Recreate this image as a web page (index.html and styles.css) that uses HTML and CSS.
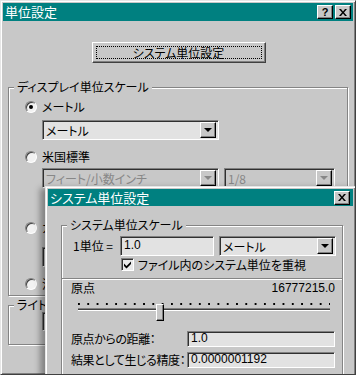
FILE: index.html
```html
<!DOCTYPE html>
<html lang="ja">
<head>
    <meta charset="UTF-8">
    <title>単位設定</title>
    <link rel="stylesheet" href="styles.css">
</head>
<body>
    <div class="window main-window">
        <div class="titlebar">
            <span class="title">単位設定</span>
            <span class="caption-buttons">
                <span class="cap-btn help">?</span>
                <span class="cap-btn">
                    <svg width="8" height="7" viewBox="0 0 8 7"><path d="M0 0h2l2 2.5L6 0h2L5 3.5 8 7H6L4 4.5 2 7H0l3-3.5z" fill="#000"/></svg>
                </span>
            </span>
        </div>
        <div class="main-body">
            <div class="button-row">
                <div class="push-button"><span class="focus-ring">システム単位設定</span></div>
            </div>

            <fieldset class="group display-group">
                <legend>ディスプレイ単位スケール</legend>
                <div class="option-row first"><span class="radio checked"></span><span>メートル</span></div>
                <div class="indent gap-6">
                    <div class="combo w-176"><span class="combo-text">メートル</span><span class="combo-arrow"></span></div>
                </div>
                <div class="option-row gap-10"><span class="radio"></span><span>米国標準</span></div>
                <div class="indent combo-pair gap-4">
                    <div class="combo disabled w-176"><span class="combo-text">フィート/小数インチ</span><span class="combo-arrow"></span></div>
                    <div class="combo disabled w-110"><span class="combo-text">1/8</span><span class="combo-arrow"></span></div>
                </div>
                <div class="option-row gap-33"><span class="radio"></span><span>カスタム</span></div>
                <div class="indent gap-12">
                    <div class="combo w-176"><span class="combo-text">FL</span><span class="combo-arrow"></span></div>
                </div>
                <div class="option-row gap-10"><span class="radio"></span><span>汎用単位</span></div>
            </fieldset>

            <fieldset class="group light-group">
                <legend>ライト単位</legend>
                <div class="indent">
                    <div class="combo w-176 short"><span class="combo-text">インターナショナル</span><span class="combo-arrow"></span></div>
                </div>
            </fieldset>
        </div>

        <!-- second dialog lies over the first one -->
        <div class="window sys-dialog">
            <div class="titlebar">
                <span class="title">システム単位設定</span>
                <span class="caption-buttons">
                    <span class="cap-btn">
                        <svg width="8" height="7" viewBox="0 0 8 7"><path d="M0 0h2l2 2.5L6 0h2L5 3.5 8 7H6L4 4.5 2 7H0l3-3.5z" fill="#000"/></svg>
                    </span>
                </span>
            </div>
            <div class="sys-body">
                <fieldset class="group sys-group">
                    <legend>システム単位スケール</legend>
                    <div class="unit-row">
                        <span class="unit-label">1単位 =</span>
                        <div class="field w-94">1.0</div>
                        <div class="combo w-117"><span class="combo-text">メートル</span><span class="combo-arrow"></span></div>
                    </div>
                    <div class="check-row">
                        <span class="checkbox">
                            <svg width="9" height="9" viewBox="0 0 9 9"><path d="M1 3.5l2.5 2.5L8 1.5v2.5L3.5 8.5 1 6z" fill="#000"/></svg>
                        </span>
                        <span>ファイル内のシステム単位を重視</span>
                    </div>

                    <div class="origin-section">
                        <div class="origin-row">
                            <span>原点</span>
                            <span>16777215.0</span>
                        </div>
                        <div class="slider">
                            <div class="ticks"></div>
                            <div class="track"></div>
                            <div class="thumb"></div>
                        </div>
                        <div class="value-row">
                            <span class="value-label">原点からの距離：</span>
                            <div class="field w-148">1.0</div>
                        </div>
                        <div class="value-row">
                            <span class="value-label">結果として生じる精度：</span>
                            <div class="field w-148">0.0000001192</div>
                        </div>
                    </div>
                </fieldset>
            </div>
        </div>
    </div>
</body>
</html>
```

FILE: styles.css
```css
body {
    margin: 0;
    padding: 0;
    width: 356px;
    height: 375px;
    overflow: hidden;
    background-color: #c8c8c8;
    font-family: "Noto Sans CJK JP", sans-serif;
    font-size: 12px;
    font-feature-settings: "palt";
    color: #000;
}
.window {
    box-sizing: border-box;
    background-color: #c8c8c8;
    border: 1px solid;
    border-color: #e6e6e6 #404040 #404040 #e6e6e6;
    padding: 2px;
    box-shadow: inset 1px 1px 0 #fff, inset -1px -1px 0 #808080;
}
.main-window {
    position: relative;
    width: 356px;
    height: 375px;
    overflow: hidden;
}
.titlebar {
    height: 18px;
    background-color: #008080;
    color: #fff;
    display: flex;
    align-items: center;
    justify-content: space-between;
    padding: 0 2px 0 2px;
}
.title {
    font-size: 13px;
    line-height: 14px;
}
.caption-buttons {
    display: flex;
    gap: 2px;
}
.cap-btn {
    box-sizing: border-box;
    width: 16px;
    height: 14px;
    background-color: #c8c8c8;
    border: 1px solid;
    border-color: #fff #000 #000 #fff;
    box-shadow: inset -1px -1px 0 #808080;
    display: flex;
    align-items: center;
    justify-content: center;
    color: #000;
}
.help {
    font-family: "Liberation Sans", sans-serif;
    font-weight: bold;
    font-size: 11px;
    line-height: 12px;
}

.main-body {
    padding: 21px 5px 0 5px;
}
.button-row {
    display: flex;
    justify-content: center;
    margin-bottom: 17px;
}
.push-button {
    box-sizing: border-box;
    width: 174px;
    height: 21px;
    margin-left: 1px;
    border: 1px solid;
    border-color: #fff #404040 #404040 #fff;
    box-shadow: inset -1px -1px 0 #808080;
    padding: 3px;
}
.focus-ring {
    display: flex;
    align-items: center;
    justify-content: center;
    height: 100%;
    box-sizing: border-box;
    border: 1px dotted #000;
    line-height: 13px;
}

.group {
    margin: 0;
    padding: 0 0 4px 0;
    border: 1px solid #848484;
    box-shadow: 1px 1px 0 #fff, inset 1px 1px 0 #fff;
    min-width: 0;
}
.group legend {
    padding: 0 3px;
    margin-left: 5px;
    line-height: 14px;
    height: 14px;
    background-color: #c8c8c8;
}
.display-group {
    width: 340px;
    box-sizing: border-box;
}
.light-group {
    width: 340px;
    box-sizing: border-box;
    margin-top: 2px;
    height: 47px;
    padding-bottom: 0;
}
.option-row {
    display: flex;
    align-items: center;
    height: 14px;
    line-height: 14px;
    padding-left: 16px;
    gap: 5px;
}
.option-row.first {
    margin-top: 6px;
}
.gap-4 { margin-top: 4px; }
.gap-6 { margin-top: 6px; }
.gap-10 { margin-top: 10px; }
.gap-12 { margin-top: 12px; }
.gap-33 { margin-top: 33px; }

.radio {
    box-sizing: border-box;
    width: 12px;
    height: 12px;
    border-radius: 50%;
    border: 1px solid;
    border-color: #808080 #fff #fff #808080;
    background-color: #f2f2f2;
    box-shadow: inset 1px 1px 0 #404040;
    position: relative;
}
.radio.checked::after {
    content: "";
    position: absolute;
    left: 3px;
    top: 3px;
    width: 4px;
    height: 4px;
    border-radius: 50%;
    background-color: #000;
}
.indent {
    padding-left: 33px;
}
.combo-pair {
    display: flex;
    gap: 5px;
}
.combo {
    box-sizing: border-box;
    height: 20px;
    display: flex;
    align-items: center;
    justify-content: space-between;
    background-color: #e2e2e2;
    border: 1px solid;
    border-color: #808080 #fff #fff #808080;
    box-shadow: inset 1px 1px 0 #303030;
    padding: 0 2px 0 3px;
}
.combo.short {
    height: 19px;
}
.combo-text {
    line-height: 14px;
    padding-top: 1px;
}
.combo-arrow {
    box-sizing: border-box;
    width: 16px;
    height: 16px;
    background-color: #c8c8c8;
    border: 1px solid;
    border-color: #fff #000 #000 #fff;
    box-shadow: inset -1px -1px 0 #808080;
    position: relative;
}
.combo-arrow::after {
    content: "";
    position: absolute;
    left: 3px;
    top: 5px;
    border-left: 4px solid transparent;
    border-right: 4px solid transparent;
    border-top: 4px solid #000;
}
.combo.disabled {
    background-color: #c8c8c8;
    color: #878787;
}
.combo.disabled .combo-arrow::after {
    border-top-color: #878787;
}
.w-176 { width: 177px; }
.w-110 { width: 111px; }
.w-117 { width: 117px; }
.w-94 { width: 94px; }
.w-148 { width: 148px; }

/* system unit dialog */
.sys-dialog {
    position: absolute;
    left: 44px;
    top: 185px;
    width: 311px;
    height: 190px;
    box-shadow: inset 1px 1px 0 #fff, inset -1px -1px 0 #808080, -5px 2px 6px rgba(0, 0, 0, 0.35);
}
.sys-dialog .titlebar {
    height: 17px;
}
.sys-dialog .cap-btn {
    margin-right: 1px;
}
.sys-body {
    padding: 12px 10px 0 13px;
}
.sys-group {
    box-sizing: border-box;
    width: 282px;
    padding: 0 0 6px 0;
}
.unit-row {
    display: flex;
    align-items: center;
    margin-top: 4px;
    height: 20px;
    padding-left: 11px;
}
.unit-label {
    width: 47px;
    line-height: 14px;
    white-space: nowrap;
}
.field {
    box-sizing: border-box;
    flex-shrink: 0;
    height: 20px;
    background-color: #e2e2e2;
    border: 1px solid;
    border-color: #808080 #fff #fff #808080;
    box-shadow: inset 1px 1px 0 #303030;
    padding: 0 2px 0 3px;
    line-height: 16px;
    font-family: "Liberation Sans", sans-serif;
    font-size: 12px;
}
.unit-row .field {
    margin-right: 5px;
}
.check-row {
    display: flex;
    align-items: center;
    gap: 4px;
    height: 13px;
    margin-top: 2px;
    padding-left: 59px;
    line-height: 14px;
}
.checkbox {
    box-sizing: border-box;
    width: 13px;
    height: 13px;
    border: 1px solid;
    border-color: #808080 #fff #fff #808080;
    box-shadow: inset 1px 1px 0 #303030;
    background-color: #eaeaea;
    display: flex;
    align-items: center;
    justify-content: center;
}
.origin-section {
    margin-top: 7px;
    border-top: 1px solid #848484;
    box-shadow: inset 0 1px 0 #fff;
    padding: 2px 7px 0 9px;
}
.origin-row {
    display: flex;
    justify-content: space-between;
    height: 14px;
    line-height: 14px;
}
.origin-row span:last-child {
    font-family: "Liberation Sans", sans-serif;
}
.slider {
    position: relative;
    height: 18px;
    margin: 1px 5px 0 7px;
}
.ticks {
    height: 2px;
    margin-top: 8px;
    background-image: linear-gradient(to right, #000 2px, transparent 2px);
    background-size: 9.3px 2px;
}
.track {
    margin-top: 3px;
    border-top: 1px solid #808080;
    border-bottom: 1px solid #fff;
    background-color: #404040;
    height: 1px;
}
.thumb {
    position: absolute;
    left: 78px;
    top: 1px;
    box-sizing: border-box;
    width: 8px;
    height: 17px;
    background-color: #c8c8c8;
    border: 1px solid;
    border-color: #fff #000 #000 #fff;
    box-shadow: inset -1px -1px 0 #808080;
}
.value-row {
    display: flex;
    align-items: center;
    justify-content: space-between;
    height: 16px;
    margin-top: 10px;
}
.value-row + .value-row {
    margin-top: 5px;
}
.value-label {
    line-height: 14px;
    white-space: nowrap;
    letter-spacing: -0.4px;
}
.value-row .field {
    height: 16px;
    line-height: 13px;
    padding-left: 3px;
    margin-right: 0;
}
```
